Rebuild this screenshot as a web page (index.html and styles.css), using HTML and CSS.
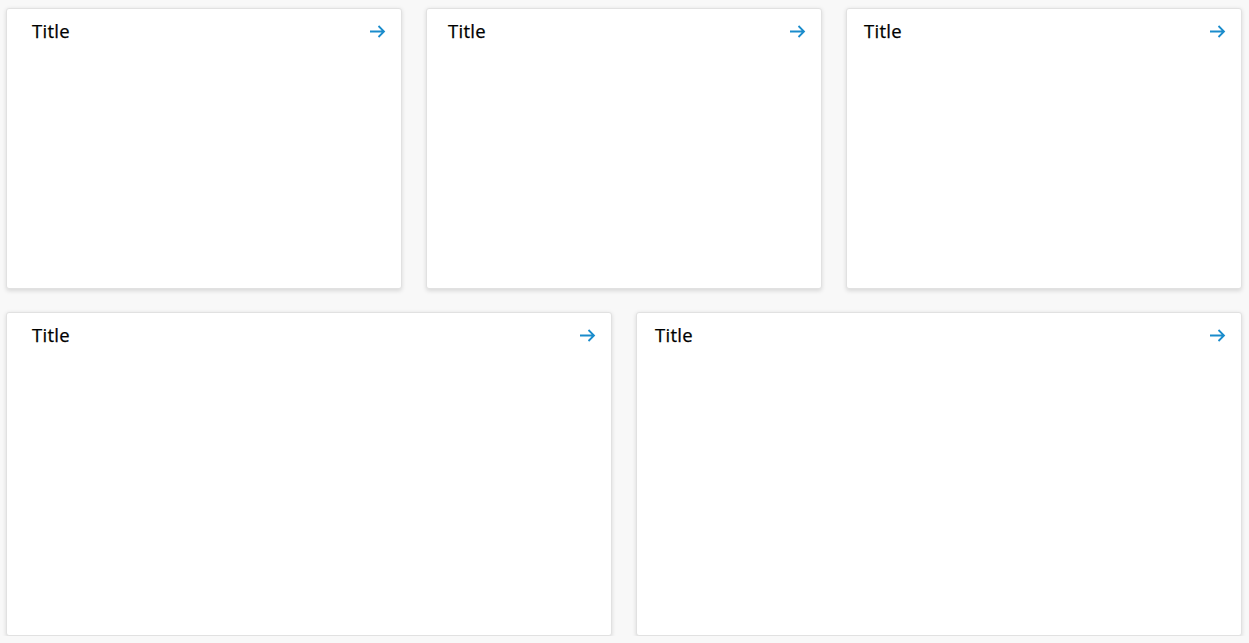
FILE: index.html
```html
<!DOCTYPE html>
<html>
<head>
<meta charset="utf-8">
<link rel="stylesheet" href="styles.css">
</head>
<body>
<div class="dash">
  <div class="row row-3">
    <div class="card"><div class="card-head pad-a"><span class="title">Title</span><svg class="arrow" width="17" height="13" viewBox="0 0 17 13"><path d="M1 6.5H15M9.5 1L15 6.5L9.5 12" fill="none" stroke="currentColor" stroke-width="1.8"/></svg></div></div>
    <div class="card"><div class="card-head pad-b"><span class="title">Title</span><svg class="arrow" width="17" height="13" viewBox="0 0 17 13"><path d="M1 6.5H15M9.5 1L15 6.5L9.5 12" fill="none" stroke="currentColor" stroke-width="1.8"/></svg></div></div>
    <div class="card"><div class="card-head pad-c"><span class="title">Title</span><svg class="arrow" width="17" height="13" viewBox="0 0 17 13"><path d="M1 6.5H15M9.5 1L15 6.5L9.5 12" fill="none" stroke="currentColor" stroke-width="1.8"/></svg></div></div>
  </div>
  <div class="row row-2">
    <div class="card"><div class="card-head pad-a"><span class="title">Title</span><svg class="arrow" width="17" height="13" viewBox="0 0 17 13"><path d="M1 6.5H15M9.5 1L15 6.5L9.5 12" fill="none" stroke="currentColor" stroke-width="1.8"/></svg></div></div>
    <div class="card"><div class="card-head pad-d"><span class="title">Title</span><svg class="arrow" width="17" height="13" viewBox="0 0 17 13"><path d="M1 6.5H15M9.5 1L15 6.5L9.5 12" fill="none" stroke="currentColor" stroke-width="1.8"/></svg></div></div>
  </div>
</div>
</body>
</html>
```
FILE: styles.css
```css
html, body {
  margin: 0;
  padding: 0;
  background: #f8f8f8;
  font-family: "Open Sans", "Noto Sans", sans-serif;
}
.dash {
  padding: 8px 7px 0 6px;
  display: flex;
  flex-direction: column;
  gap: 23px;
}
.row {
  display: grid;
  gap: 24px;
}
.row-3 { grid-template-columns: repeat(3, 1fr); }
.row-2 { grid-template-columns: repeat(2, 1fr); }
.row-3 .card { height: 281px; }
.row-2 .card { height: 324px; }
.card {
  box-sizing: border-box;
  background: #fff;
  border: 1px solid #e1e1e1;
  border-radius: 3px;
  box-shadow: 0 1.5px 4px rgba(0, 0, 0, 0.13);
}
.card-head {
  display: flex;
  justify-content: space-between;
  align-items: center;
  padding: 9px 15px 0 25px;
  height: 24px;
}
.pad-a { padding-left: 25px; }
.pad-b { padding-left: 21px; }
.pad-c { padding-left: 17px; }
.pad-d { padding-left: 18px; }
.title {
  font-size: 18.5px;
  font-weight: 500;
  color: #000;
  letter-spacing: 0.3px;
  -webkit-text-stroke: 0.25px #000;
}
.arrow {
  color: #1a8ccc;
  margin-top: 2px;
}
```
